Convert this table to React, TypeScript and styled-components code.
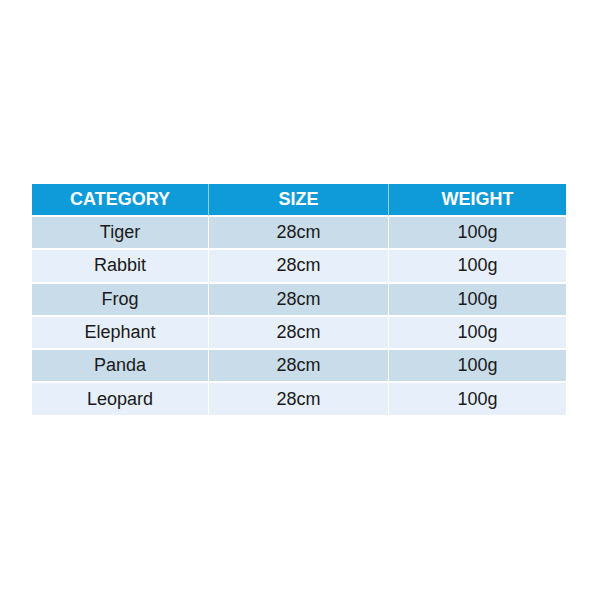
import React from "react";
import styled, { createGlobalStyle } from "styled-components";

const GlobalStyle = createGlobalStyle`
  html, body {
    margin: 0;
    padding: 0;
    background: #ffffff;
  }
  body {
    font-family: "Liberation Sans", Arial, sans-serif;
  }
`;

const Page = styled.div`
  width: 600px;
  height: 600px;
  display: flex;
  justify-content: center;
  padding-top: 184px;
  box-sizing: border-box;
`;

const Table = styled.table`
  width: 534px;
  height: fit-content;
  border-collapse: separate;
  border-spacing: 0;
  table-layout: fixed;
  margin-left: -2px;
`;

const Col = styled.col<{ $w: number }>`
  width: ${(p) => p.$w}px;
`;

const HeadCell = styled.th`
  background: #0f9bd9;
  color: #ffffff;
  font-size: 18px;
  font-weight: 700;
  height: 31px;
  padding: 0;
  text-align: center;
  border-left: 1px solid #8fd0ee;
  border-bottom: 2px solid #ffffff;
  &:first-child {
    border-left: none;
  }
`;

const Row = styled.tr<{ $alt: boolean }>`
  background: ${(p) => (p.$alt ? "#e6effa" : "#c9dcea")};
`;

const Cell = styled.td`
  color: #1a1a1a;
  font-size: 18px;
  height: 31.3px;
  padding: 0;
  text-align: center;
  border-left: 1px solid #ffffff;
  border-bottom: 2px solid #ffffff;
  &:first-child {
    border-left: none;
  }
`;

const animals = ["Tiger", "Rabbit", "Frog", "Elephant", "Panda", "Leopard"];

const App = () => {
  return (
    <>
      <GlobalStyle />
      <Page>
        <Table>
          <colgroup>
            <Col $w={176} />
            <Col $w={180} />
            <Col $w={178} />
          </colgroup>
          <thead>
            <tr>
              <HeadCell>CATEGORY</HeadCell>
              <HeadCell>SIZE</HeadCell>
              <HeadCell>WEIGHT</HeadCell>
            </tr>
          </thead>
          <tbody>
            {animals.map((name, index) => (
              <Row key={name} $alt={index % 2 === 1}>
                <Cell>{name}</Cell>
                <Cell>28cm</Cell>
                <Cell>100g</Cell>
              </Row>
            ))}
          </tbody>
        </Table>
      </Page>
    </>
  );
};

export default App;
